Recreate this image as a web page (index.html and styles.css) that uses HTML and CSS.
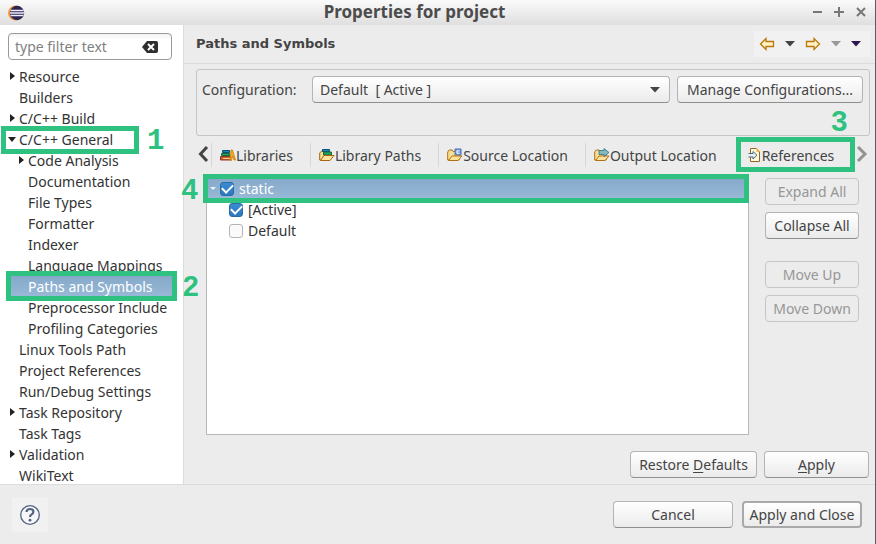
FILE: index.html
```html
<!DOCTYPE html>
<html lang="en">
<head>
<meta charset="utf-8">
<title>Properties for project</title>
<link rel="stylesheet" href="styles.css">
</head>
<body>
<div class="window">
  <header class="titlebar">
    <svg class="app-icon" viewBox="0 0 18 16" width="18" height="16"><circle cx="7.500" cy="8" r="7.500" fill="#f39a35"/><circle cx="9" cy="8" r="7.200" fill="#2c2553"/><path d="M2.500 5.500h13M2 8h14M2.500 10.500h13" stroke="#eef" stroke-width="1.400"/></svg>
    <h1 class="title">Properties for project</h1>
    <div class="window-controls">
      <button aria-label="Minimize"><svg viewBox="0 0 12 12" width="12" height="12"><path d="M2 5h9" stroke="#777" stroke-width="2"/></svg></button>
      <button aria-label="Maximize"><svg viewBox="0 0 12 12" width="12" height="12"><path d="M1 5h10M6 0v10" stroke="#777" stroke-width="2"/></svg></button>
      <button aria-label="Close"><svg viewBox="0 0 12 12" width="12" height="12"><path d="M2 1l8 8M10 1l-8 8" stroke="#777" stroke-width="2"/></svg></button>
    </div>
  </header>

  <div class="body">
    <nav class="sidebar">
      <div class="filter">
        <input type="text" placeholder="type filter text" aria-label="type filter text">
        <button class="clear" aria-label="Clear"><svg viewBox="0 0 16 12" width="16" height="12"><path d="M5 0h9q2 0 2 2v8q0 2-2 2H5L0 6z" fill="#2e2e2e"/><path d="M6 3l6 6M12 3l-6 6" stroke="#fff" stroke-width="2"/></svg></button>
      </div>
      <ul class="tree">
        <li class="closed">Resource</li>
        <li>Builders</li>
        <li class="closed">C/C++ Build</li>
        <li class="open">C/C++ General<span class="mark mark-general"></span><span class="step step-general">1</span></li>
        <li class="child closed">Code Analysis</li>
        <li class="child">Documentation</li>
        <li class="child">File Types</li>
        <li class="child">Formatter</li>
        <li class="child">Indexer</li>
        <li class="child">Language Mappings</li>
        <li class="current selected">Paths and Symbols<span class="mark mark-paths"></span><span class="step step-paths">2</span></li>
        <li class="child">Preprocessor Include</li>
        <li class="child">Profiling Categories</li>
        <li>Linux Tools Path</li>
        <li>Project References</li>
        <li>Run/Debug Settings</li>
        <li class="closed">Task Repository</li>
        <li>Task Tags</li>
        <li class="closed">Validation</li>
        <li>WikiText</li>
      </ul>
    </nav>

    <main class="main">
      <div class="page-head">
        <h2>Paths and Symbols</h2>
        <div class="history">
          <button aria-label="Back"><svg viewBox="0 0 16 14" width="16" height="14"><path d="M1.500 7L7 1.500V4.500h7.500v5H7v3z" fill="#fff3c4" stroke="#b9780f" stroke-width="1.300"/></svg></button>
          <button aria-label="Back history"><svg viewBox="0 0 10 6" width="10" height="6"><path d="M0 0h10L5 5.500z" fill="#444"/></svg></button>
          <button aria-label="Forward"><svg viewBox="0 0 16 14" width="16" height="14"><path d="M14.500 7L9 1.500V4.500H1.500v5H9v3z" fill="#fff3c4" stroke="#b9780f" stroke-width="1.300"/></svg></button>
          <button aria-label="Forward history"><svg viewBox="0 0 10 6" width="10" height="6"><path d="M0 0h10L5 5.500z" fill="#999"/></svg></button>
          <button aria-label="Menu"><svg viewBox="0 0 10 6" width="10" height="6"><path d="M0 0h10L5 5.500z" fill="#2d1650"/></svg></button>
        </div>
      </div>

      <div class="content">
        <section class="config">
          <label for="configuration">Configuration:</label>
          <div class="select">
            <select id="configuration"><option>Default&nbsp; [ Active ]</option></select>
            <svg viewBox="0 0 10 6" width="10" height="6"><path d="M0 0h10L5 5.500z" fill="#444"/></svg>
          </div>
          <button class="btn">Manage Configurations...</button>
        </section>

        <div class="tabs">
          <button class="scroll" aria-label="Previous tabs"><svg viewBox="0 0 12 18" width="12" height="18"><path d="M10 1L3.500 8l6.500 7" fill="none" stroke="#444" stroke-width="3"/></svg></button>
          <button class="tab"><svg viewBox="0 0 16 14" width="16" height="14"><path d="M2.500 2.500h7v2h-7z" fill="#1b86b8" stroke="#0b5076"/><path d="M1.500 5.500h8v2h-8z" fill="#28a45c" stroke="#126a40"/><path d="M.500 8.500h10v3.500H.500z" fill="#d35b2c" stroke="#8f3b22"/><path d="M3 10.500h7" stroke="#f2d49b"/><path d="M10 12.500L11 2h1.500l3 10h-1.500L12.500 8 11.500 12.500z" fill="#f5ad20" stroke="#c47d0a" stroke-width=".8"/></svg>Libraries</button>
          <button class="tab"><svg viewBox="0 0 16 14" width="16" height="14"><path d="M.700 12V5l2-2h2v3h6v6z" fill="#f8df91" stroke="#a66414"/><path d="M3.500 1.500h7v2h-7z" fill="#1b86b8" stroke="#0b5076"/><path d="M4.500 4h8v3h-8z" fill="#28a45c" stroke="#126a40"/><path d="M1.500 12.500L5 7.500h10l-4 5z" fill="#ffe59b" stroke="#a66414"/></svg>Library Paths</button>
          <button class="tab"><svg viewBox="0 0 16 14" width="16" height="14"><path d="M.700 12V4l1.500-2h3l1 1.500h6V12z" fill="#f8df91" stroke="#b07018"/><path d="M8 1h6v6H8z" fill="#7d9fdd" stroke="#456eb7"/><path d="M12.500 2.800h-2.500v2.500h2.500" fill="none" stroke="#fff"/><path d="M1.500 12.500L5 8h10l-4 4.500z" fill="#ffe29a" stroke="#b07018"/></svg>Source Location</button>
          <button class="tab"><svg viewBox="0 0 16 14" width="16" height="14"><path d="M.700 12V4l1.500-2h3l1 1.500h6V12z" fill="#f8df91" stroke="#b07018"/><path d="M1.500 12.500L5 8h10l-4 4.500z" fill="#ffe29a" stroke="#b07018"/><path d="M5 2.500h5V.500l5 4-5 4v-2H5z" fill="#87b9b8" stroke="#367a94" stroke-width=".9"/></svg>Output Location</button>
          <button class="tab active"><svg viewBox="0 0 14 16" width="14" height="16"><path d="M2.500 1.500h6l3 3v10h-9z" fill="#fff9dd" stroke="#8e6a24"/><path d="M8.500 1v4h3.500z" fill="#efb64e"/><path d="M.500 6.500h4.500v-2l4 3.800-4 3.700v-2H.500" fill="#e7f0f8" stroke="#49647e"/></svg>References<span class="mark mark-tab"></span><span class="step step-tab">3</span></button>
          <button class="scroll" aria-label="Next tabs"><svg viewBox="0 0 12 18" width="12" height="18"><path d="M2 1l7 7-7 7" fill="none" stroke="#929292" stroke-width="3"/></svg></button>
        </div>

        <div class="references">
          <div class="list">
            <div class="list-row selected"><i class="expander"></i><input type="checkbox" id="static" checked><label for="static">static</label><span class="mark mark-static"></span><span class="step step-static">4</span></div>
            <div class="list-row nested"><input type="checkbox" id="active" checked><label for="active">[Active]</label></div>
            <div class="list-row nested"><input type="checkbox" id="default"><label for="default">Default</label></div>
          </div>
          <div class="actions">
            <button class="btn" disabled>Expand All</button>
            <button class="btn">Collapse All</button>
            <button class="btn group-start" disabled>Move Up</button>
            <button class="btn" disabled>Move Down</button>
          </div>
        </div>

        <div class="page-actions">
          <button class="btn restore">Restore <u>D</u>efaults</button>
          <button class="btn apply"><u>A</u>pply</button>
        </div>
      </div>
    </main>
  </div>

  <footer class="footer">
    <button class="help" aria-label="Help"><svg viewBox="0 0 22 22" width="22" height="22"><circle cx="11" cy="11" r="9.300" fill="#f7f7f9" stroke="#52627f" stroke-width="1.300"/><path d="M7.500 8q.3-3 3.500-3t3.400 2.700q0 1.600-1.800 2.700Q11 11.300 11 13" fill="none" stroke="#52627f" stroke-width="2.200"/><circle cx="11" cy="16.200" r="1.400" fill="#52627f"/></svg></button>
    <div class="footer-actions">
      <button class="btn">Cancel</button>
      <button class="btn default">Apply and Close</button>
    </div>
  </footer>
</div>
</body>
</html>
```

FILE: styles.css
```css
* { box-sizing: border-box; }

body {
  margin: 0;
  background: #ececec;
  color: #333;
  font: 14px/21px "Noto Sans", "Open Sans", sans-serif;
}

button, input, select { font: inherit; color: inherit; }

button {
  padding: 0;
  border: 0;
  background: none;
}

svg { display: block; flex: none; }

.window {
  display: flex;
  flex-direction: column;
  height: 100vh;
  overflow: hidden;
  border-right: 1px solid #5c5c5c;
}

.titlebar {
  display: grid;
  grid-template-columns: 1fr auto 1fr;
  align-items: center;
  height: 25px;
  flex: none;
  padding: 0 8px;
  background: linear-gradient(#fafafa, #dfdfdf);
}

.title {
  margin: 0;
  padding: 0 46px 2px 0;
  color: #4c4c4c;
  font-size: 17px;
  line-height: 21px;
}

.window-controls { display: flex; justify-content: flex-end; gap: 10px; }

.body { display: flex; flex: 1; min-height: 0; overflow: hidden; }

.sidebar {
  width: 184px;
  flex: none;
  background: #fff;
  border-right: 1px solid #dcdcdc;
}

.filter {
  display: flex;
  align-items: center;
  height: 27px;
  margin: 8px 11px 6px 8px;
  padding: 0 13px 0 6px;
  border: 1px solid #999;
  border-radius: 4px;
  background: linear-gradient(#f4f4f4, #fff 6px);
}

.filter input {
  flex: 1;
  min-width: 0;
  padding: 0;
  border: 0;
  outline: 0;
  background: none;
}

.filter input::placeholder { color: #808080; opacity: 1; }

.tree { margin: 0; padding: 0; list-style: none; }

.tree li {
  position: relative;
  height: 21px;
  padding-left: 19px;
  white-space: nowrap;
}

.tree .child { padding-left: 28px; }

.tree .current { margin: 0 11px; padding-left: 17px; }

.selected {
  background: linear-gradient(#86a9ca, #98b9d7);
  color: #fff;
}

.closed::before, .open::before {
  content: "";
  position: absolute;
  left: 10px;
  top: 6px;
  border: 4px solid transparent;
  border-left: 5px solid #222;
  border-right: 0;
}

.child.closed::before { left: 19px; }

.open::before {
  left: 8px;
  top: 8px;
  border: 4px solid transparent;
  border-top: 5px solid #222;
  border-bottom: 0;
}

.mark {
  position: absolute;
  z-index: 1;
  border: 5px solid #2fc180;
  pointer-events: none;
}

.step {
  position: absolute;
  z-index: 1;
  color: #2fc180;
  font: bold 29px/27px "Liberation Mono", monospace;
}

.mark-general { left: 1px; top: -3px; width: 138px; height: 28px; }
.step-general { left: 147px; top: -1px; }

.mark-paths { left: -5px; top: -5px; right: -5px; height: 30px; }
.step-paths { left: 171px; top: -1px; }

.main { flex: 1; min-width: 0; display: flex; flex-direction: column; }

.page-head {
  display: flex;
  align-items: center;
  justify-content: space-between;
  height: 39px;
  flex: none;
  padding: 0 5px 0 12px;
  border-bottom: 1px solid #dcdcdc;
}

.page-head h2 {
  margin: 0;
  color: #444;
  font: bold 13px/22px "DejaVu Sans", sans-serif;
}

.history {
  display: flex;
  align-items: center;
  justify-content: space-between;
  width: 116px;
  height: 26px;
  padding: 0 9px 0 5px;
  background: #f1f1f1;
}

.content {
  flex: 1;
  min-height: 0;
  display: flex;
  flex-direction: column;
  padding: 5px 5px 6px 12px;
  color: #444;
}

.config {
  display: flex;
  align-items: flex-start;
  gap: 7px;
  height: 67px;
  flex: none;
  padding: 6px 6px 6px 5px;
  border: 1px solid #c4c4c4;
  border-radius: 3px;
}

.config label { width: 103px; line-height: 27px; }

.select { position: relative; flex: 1; }

.select select {
  display: block;
  width: 100%;
  height: 27px;
  padding: 0 7px;
  appearance: none;
}

.select select, .btn {
  border: 1px solid #b4b4b4;
  border-bottom-color: #8f8f8f;
  border-radius: 4px;
  background: linear-gradient(#fff, #ebebeb);
}

.select svg { position: absolute; right: 10px; top: 11px; pointer-events: none; }

.btn { height: 27px; line-height: 20px; white-space: nowrap; }

.btn:disabled { color: #979797; border-color: #c6c6c6; background: #ececec; }

.config .btn { width: 186px; }

.tabs {
  display: flex;
  align-items: center;
  height: 38px;
  flex: none;
}

.scroll { width: 15px; display: flex; padding-left: 1px; }

.tab {
  position: relative;
  display: flex;
  align-items: center;
  height: 24px;
  padding: 0 17px 0 8px;
  border-left: 1px solid #d7d7d7;
  white-space: nowrap;
}

.tab.active {
  flex: 1;
  margin-left: 2px;
  padding: 0 0 0 12px;
  border-left: 0;
}

.mark-tab { left: 0; top: -6px; right: 0; height: 35px; }
.step-tab { right: 7px; top: -33px; }

.references {
  display: flex;
  gap: 16px;
  height: 261px;
  flex: none;
  padding: 3px 11px 0 10px;
}

.list { flex: 1; background: #fff; border: 1px solid #b9b9b9; }

.list-row {
  position: relative;
  display: flex;
  align-items: center;
  height: 21px;
  gap: 5px;
  padding-left: 13px;
}

.list-row.nested { padding-left: 22px; color: #333; }

.list-row input {
  appearance: none;
  width: 14px;
  height: 14px;
  margin: 0;
  border: 1px solid #b5b5b5;
  border-radius: 3px;
  background: #fafafa;
  display: grid;
  place-items: center;
}

.list-row input:checked {
  border-color: #286ba6;
  background: linear-gradient(#398bd1, #2f78bd);
}

.list-row input:checked::before {
  content: "";
  width: 9px;
  height: 5px;
  margin-bottom: 3px;
  border: solid #fff;
  border-width: 0 0 2px 2px;
  transform: rotate(-45deg);
}

.expander {
  position: absolute;
  left: 3px;
  top: 9px;
  border: 3px solid transparent;
  border-top-color: #e8f0f8;
  border-bottom: 0;
}

.mark-static { left: -4px; right: -1px; top: -4px; height: 29px; }
.step-static { left: -26px; top: 0; }

.actions {
  display: flex;
  flex-direction: column;
  gap: 7px;
  width: 94px;
  padding-top: 1px;
}

.group-start { margin-top: 15px; }

.page-actions {
  display: flex;
  justify-content: flex-end;
  gap: 7px;
  margin-top: auto;
  padding-right: 1px;
}

.restore { width: 127px; }
.apply { width: 105px; }

u { text-underline-offset: 2px; }

.footer {
  display: flex;
  justify-content: space-between;
  align-items: center;
  flex: none;
  height: 60px;
  padding: 0 13px 0 12px;
  border-top: 1px solid #dcdcdc;
  color: #444;
}

.help {
  display: grid;
  place-items: center;
  width: 36px;
  height: 34px;
  background: #f1f1f1;
}

.footer-actions { display: flex; gap: 9px; }
.footer-actions .btn { width: 120px; }
.footer-actions .default { border: 2px solid #a9a9a9; }
```
